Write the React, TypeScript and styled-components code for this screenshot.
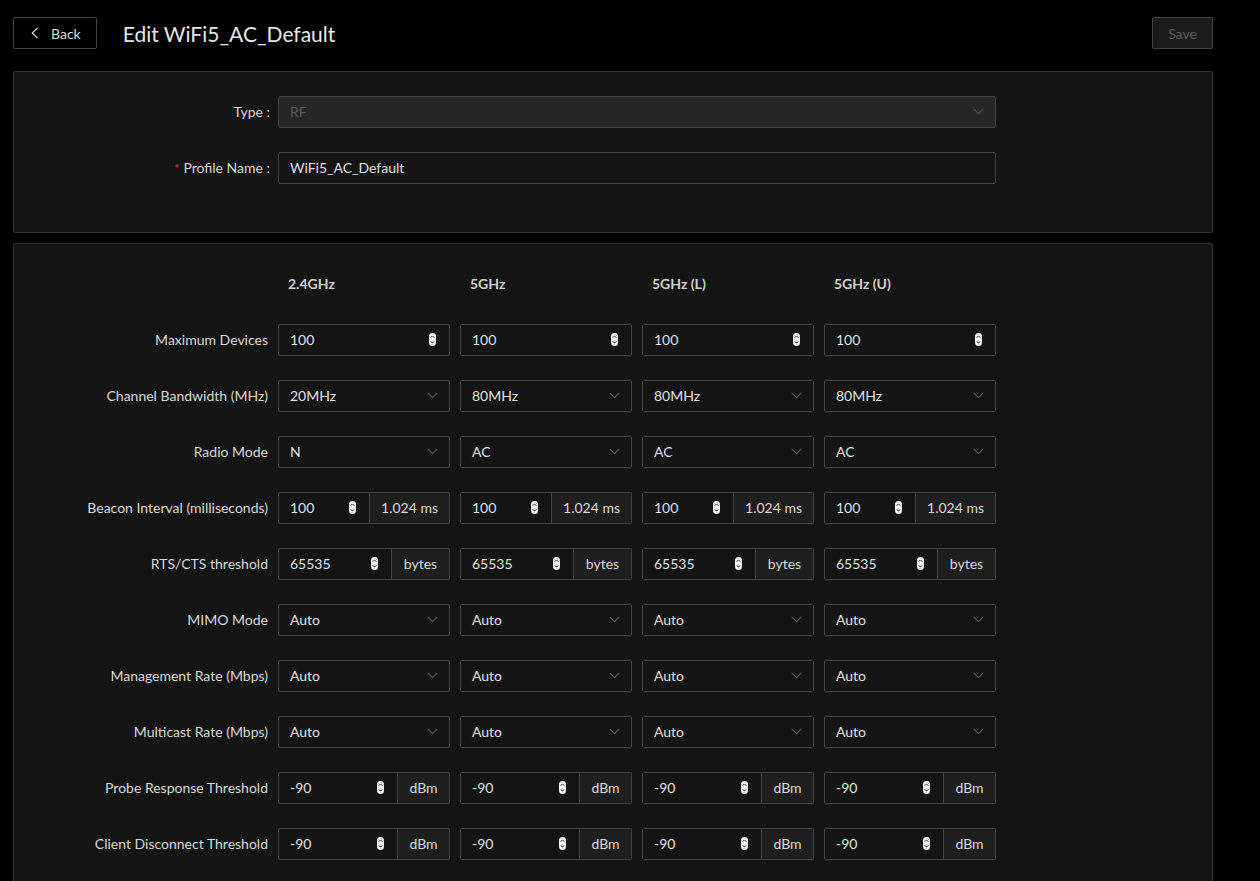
import React from 'react';
import styled, { createGlobalStyle } from 'styled-components';

const GlobalStyle = createGlobalStyle`
  body {
    margin: 0;
    background: #000;
    font-family: Lato, "Open Sans", sans-serif;
    color: #ddd;
  }
`;

const Page = styled.div`
  width: 1200px;
  padding: 17px 0 0 13px;
`;

const Header = styled.div`
  display: flex;
  align-items: center;
  height: 32px;
  margin-bottom: 22px;
`;

const BackButton = styled.button`
  display: flex;
  align-items: center;
  gap: 12px;
  height: 32px;
  padding: 0 15px 0 17px;
  background: #000;
  border: 1px solid #444;
  border-radius: 2px;
  color: #ddd;
  font-family: inherit;
  font-size: 14px;
`;

const Title = styled.h1`
  flex: 1;
  margin: 0 0 0 26px;
  font-size: 21px;
  font-weight: 400;
  color: #e6e6e6;
`;

const SaveButton = styled.button`
  height: 32px;
  width: 61px;
  background: #1b1b1b;
  border: 1px solid #444;
  border-radius: 2px;
  color: #5e5e5e;
  font-family: inherit;
  font-size: 14px;
`;

const Card = styled.section<{ $last?: boolean }>`
  background: #141414;
  border: 1px solid #333;
  border-radius: 2px;
  margin-bottom: 10px;
  padding: ${({ $last }) => ($last ? '24px 0 60px' : '24px 0 24px')};
`;

const BasicGrid = styled.div`
  display: grid;
  grid-template-columns: 256px 718px;
  column-gap: 8px;
  row-gap: 24px;
  align-items: center;
  padding-bottom: 24px;
`;

const RadioGrid = styled.div`
  display: grid;
  grid-template-columns: 254px repeat(4, 172px);
  column-gap: 10px;
  row-gap: 24px;
  align-items: center;
`;

const Label = styled.label`
  text-align: right;
  font-size: 14px;
  color: #d8d8d8;
  white-space: nowrap;
  padding-bottom: 1px;
`;

const Required = styled.span`
  color: #e0413c;
  margin-right: 4px;
  font-size: 12px;
`;

const ColHead = styled.div`
  height: 32px;
  line-height: 32px;
  padding-left: 10px;
  font-size: 14px;
  font-weight: 700;
  color: #d0d0d0;
`;

const Box = styled.div<{ $disabled?: boolean }>`
  display: flex;
  align-items: center;
  height: 32px;
  box-sizing: border-box;
  padding: 0 11px 1px;
  background: ${({ $disabled }) => ($disabled ? '#262626' : '#141414')};
  border: 1px solid #434343;
  border-radius: 2px;
  font-size: 14px;
  color: ${({ $disabled }) => ($disabled ? '#5c5c5c' : '#e0e0e0')};
`;

const Value = styled.span`
  flex: 1;
`;

const Group = styled.div`
  display: flex;
  height: 32px;
`;

const NumberBox = styled(Box)`
  flex: 1;
  border-radius: 2px 0 0 2px;
  padding-right: 13px;
`;

const SpinBox = styled(Box)`
  padding-right: 13px;
`;

const Addon = styled.div<{ $width: number }>`
  flex: 0 0 ${({ $width }) => $width}px;
  box-sizing: border-box;
  display: flex;
  align-items: center;
  justify-content: center;
  padding-bottom: 1px;
  background: #1e1e1e;
  border: 1px solid #434343;
  border-left: none;
  border-radius: 0 2px 2px 0;
  font-size: 14px;
  color: #d8d8d8;
`;

const Chevron: React.FC<{ color?: string }> = ({ color = '#5a5a5a' }) => (
  <svg width="11" height="7" viewBox="0 0 11 7">
    <path d="M0.8 0.8 L5.5 5.6 L10.2 0.8" fill="none" stroke={color} strokeWidth="1.1" />
  </svg>
);

const Spinner: React.FC = () => (
  <svg width="7" height="13" viewBox="0 0 7 13">
    <rect x="0" y="0" width="7" height="13" rx="3.5" fill="#f2f2f2" />
    <path d="M1.8 4.6 L3.5 2.9 L5.2 4.6" fill="none" stroke="#141414" strokeWidth="0.9" />
    <path d="M1.8 8.4 L3.5 10.1 L5.2 8.4" fill="none" stroke="#141414" strokeWidth="0.9" />
  </svg>
);

const Select: React.FC<{ value: string; disabled?: boolean }> = ({ value, disabled }) => (
  <Box $disabled={disabled}>
    <Value>{value}</Value>
    <Chevron color={disabled ? '#555' : '#5a5a5a'} />
  </Box>
);

const NumberInput: React.FC<{ value: string; unit?: string; unitWidth?: number }> = ({
  value,
  unit,
  unitWidth = 0,
}) =>
  unit ? (
    <Group>
      <NumberBox>
        <Value>{value}</Value>
        <Spinner />
      </NumberBox>
      <Addon $width={unitWidth}>{unit}</Addon>
    </Group>
  ) : (
    <SpinBox>
      <Value>{value}</Value>
      <Spinner />
    </SpinBox>
  );

type Row = {
  label: string;
  kind: 'select' | 'number';
  values: string[];
  unit?: string;
  unitWidth?: number;
};

const rows: Row[] = [
  { label: 'Maximum Devices', kind: 'number', values: ['100', '100', '100', '100'] },
  { label: 'Channel Bandwidth (MHz)', kind: 'select', values: ['20MHz', '80MHz', '80MHz', '80MHz'] },
  { label: 'Radio Mode', kind: 'select', values: ['N', 'AC', 'AC', 'AC'] },
  {
    label: 'Beacon Interval (milliseconds)',
    kind: 'number',
    values: ['100', '100', '100', '100'],
    unit: '1.024 ms',
    unitWidth: 80,
  },
  {
    label: 'RTS/CTS threshold',
    kind: 'number',
    values: ['65535', '65535', '65535', '65535'],
    unit: 'bytes',
    unitWidth: 58,
  },
  { label: 'MIMO Mode', kind: 'select', values: ['Auto', 'Auto', 'Auto', 'Auto'] },
  { label: 'Management Rate (Mbps)', kind: 'select', values: ['Auto', 'Auto', 'Auto', 'Auto'] },
  { label: 'Multicast Rate (Mbps)', kind: 'select', values: ['Auto', 'Auto', 'Auto', 'Auto'] },
  {
    label: 'Probe Response Threshold',
    kind: 'number',
    values: ['-90', '-90', '-90', '-90'],
    unit: 'dBm',
    unitWidth: 52,
  },
  {
    label: 'Client Disconnect Threshold',
    kind: 'number',
    values: ['-90', '-90', '-90', '-90'],
    unit: 'dBm',
    unitWidth: 52,
  },
];

const bands = ['2.4GHz', '5GHz', '5GHz (L)', '5GHz (U)'];

export default function App() {
  return (
    <Page>
      <GlobalStyle />
      <Header>
        <BackButton>
          <svg width="8" height="12" viewBox="0 0 8 12">
            <path d="M6.5 0.8 L1.3 6 L6.5 11.2" fill="none" stroke="#ddd" strokeWidth="1.2" />
          </svg>
          Back
        </BackButton>
        <Title>Edit WiFi5_AC_Default</Title>
        <SaveButton>Save</SaveButton>
      </Header>

      <Card>
        <BasicGrid>
          <Label>Type :</Label>
          <Select value="RF" disabled />
          <Label>
            <Required>*</Required>Profile Name :
          </Label>
          <Box>
            <Value>WiFi5_AC_Default</Value>
          </Box>
        </BasicGrid>
      </Card>

      <Card $last>
        <RadioGrid>
          <div />
          {bands.map((b) => (
            <ColHead key={b}>{b}</ColHead>
          ))}
          {rows.map((row) => (
            <React.Fragment key={row.label}>
              <Label>{row.label}</Label>
              {row.values.map((v, i) =>
                row.kind === 'select' ? (
                  <Select key={i} value={v} />
                ) : (
                  <NumberInput key={i} value={v} unit={row.unit} unitWidth={row.unitWidth} />
                ),
              )}
            </React.Fragment>
          ))}
        </RadioGrid>
      </Card>
    </Page>
  );
}
